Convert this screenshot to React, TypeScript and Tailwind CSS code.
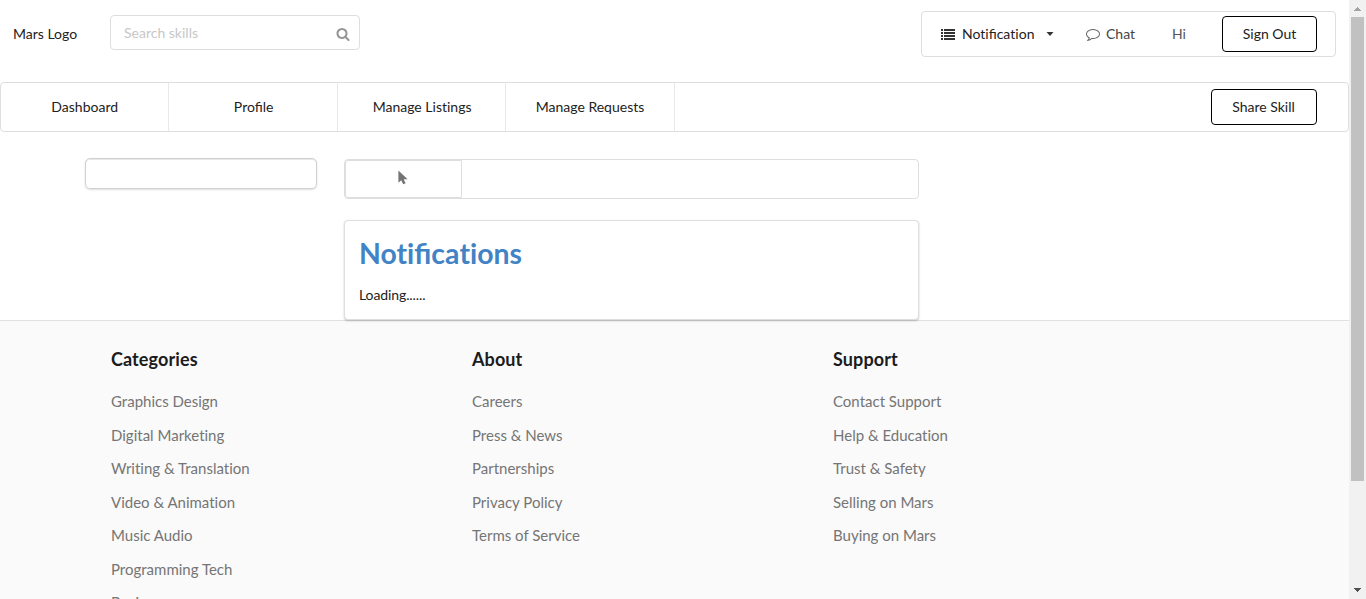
import type { ReactNode } from "react";

const tabs = [
  { label: "Dashboard", style: "" },
  { label: "Profile", style: "pl-px" },
  { label: "Manage Listings", style: "pl-px [font-variant-ligatures:none]" },
  { label: "Manage Requests", style: "" },
];

const columns = [
  {
    title: "Categories",
    links: [
      "Graphics Design",
      "Digital Marketing",
      "Writing & Translation",
      "Video & Animation",
      "Music Audio",
      "Programming Tech",
      "Business",
    ],
  },
  {
    title: "About",
    links: ["Careers", "Press & News", "Partnerships", "Privacy Policy", "Terms of Service"],
  },
  {
    title: "Support",
    links: ["Contact Support", "Help & Education", "Trust & Safety", "Selling on Mars", "Buying on Mars"],
  },
];

function SearchIcon() {
  return (
    <svg viewBox="0 0 1792 1792" className="size-[14px] fill-[#959595]">
      <path d="M1216 832q0-185-131.5-316.5t-316.5-131.5-316.5 131.5-131.5 316.5 131.5 316.5 316.5 131.5 316.5-131.5 131.5-316.5zm512 832q0 52-38 90t-90 38q-54 0-90-38l-343-342q-179 124-399 124-143 0-273.5-55.5t-225-150-150-225-55.5-273.5 55.5-273.5 150-225 225-150 273.5-55.5 273.5 55.5 225 150 150 225 55.5 273.5q0 220-124 399l343 343q37 37 37 90z" />
    </svg>
  );
}

function ListIcon() {
  return (
    <svg viewBox="0 0 14 11" className="h-[11px] w-[14px] fill-[#333]" shapeRendering="crispEdges">
      {[0, 3, 6, 9].map((y) => (
        <g key={y}>
          <rect x="0" y={y} width="2" height="2" />
          <rect x="3" y={y} width="11" height="2" />
        </g>
      ))}
    </svg>
  );
}

function ChatIcon() {
  return (
    <svg viewBox="0 0 1792 1792" className="size-[14px] fill-[#666]">
      <path d="M896 384q-204 0-381.5 69.5t-282 187.5-104.5 255q0 112 71.5 213.5t201.5 175.5l87 50-27 96q-24 91-70 172 152-63 275-171l43-38 57 6q69 8 130 8 204 0 381.5-69.5t282-187.5 104.5-255-104.5-255-282-187.5-381.5-69.5zm896 512q0 174-120 321.5t-326 233-450 85.5q-70 0-145-8-198 175-460 242-49 14-114 22h-5q-15 0-27-10.5t-16-27.5v-1q-3-4-.5-12t2-10 4.5-9.5l6-9 7-8.5 8-9q7-8 31-34.5t34.5-38 31-39.5 32.5-51 27-59 26-76q-157-89-247.5-220t-90.5-281q0-174 120-321.5t326-233 450-85.5 450 85.5 326 233 120 321.5z" />
    </svg>
  );
}

/* Keeps the "fi" ligature while leaving both "ti" pairs unjoined. */
function NotificationWord({ plural = false }: { plural?: boolean }) {
  return (
    <>
      <span className="[font-variant-ligatures:none]">Noti</span>fica
      <span className="[font-variant-ligatures:none]">{plural ? "tions" : "tion"}</span>
    </>
  );
}

function OutlineButton({ children, className }: { children: ReactNode; className: string }) {
  return (
    <button className={`h-9 shrink-0 rounded border border-black bg-white p-0 text-center ${className}`}>
      {children}
    </button>
  );
}

function Header() {
  return (
    <header className="flex h-[82px] shrink-0 items-start px-[13px]">
      <span className="mt-6 w-[97px]">Mars Logo</span>
      <div className="mt-[15px] flex h-[35px] w-[250px] items-center rounded border border-[#dededf] pr-[9px] pl-[13px]">
        <input
          className="w-full min-w-0 flex-1 outline-none placeholder:text-[#c7c7c7]"
          placeholder="Search skills"
        />
        <span className="mt-[3px]">
          <SearchIcon />
        </span>
      </div>
      <nav className="mt-[11px] ml-auto flex h-[46px] w-[415px] items-center rounded border border-[#dededf] pl-[19px]">
        <ListIcon />
        <span className="ml-[7px] w-[84px]">
          <NotificationWord />
        </span>
        <svg viewBox="0 0 8 4" className="h-1 w-2 fill-[#333]">
          <path d="M0.5 0h7L4 4z" />
        </svg>
        <span className="ml-[32px]">
          <ChatIcon />
        </span>
        <span className="ml-[6px] w-[66px] text-[#444]">Chat</span>
        <span className="w-[50px] text-[#555]">Hi</span>
        <OutlineButton className="w-[95px] text-[#222]">Sign Out</OutlineButton>
      </nav>
    </header>
  );
}

function TabBar() {
  return (
    <nav className="flex h-[50px] shrink-0 items-center rounded border border-[#dededf] pr-[31px]">
      {tabs.map((tab) => (
        <a
          key={tab.label}
          className={`flex h-full w-[168.45px] items-center justify-center border-r border-[#e8e8e9] ${tab.style}`}
        >
          {tab.label}
        </a>
      ))}
      <OutlineButton className="ml-auto w-[106px] pr-px">Share Skill</OutlineButton>
    </nav>
  );
}

function Profile() {
  return (
    <main className="relative z-10 flex h-[188px] shrink-0 items-start pt-[26px] pl-[85px]">
      <div className="h-[31px] w-[232px] rounded-[5px] border border-[#d1d1d2] shadow-[0_1px_2px_0_rgba(34,36,38,0.15),inset_0_1px_0_0_#e8e8e8]" />
      <div className="mt-px ml-[27px] w-[575px]">
        <div className="h-10 rounded border border-[#dededf]">
          <div className="h-full w-[117px] rounded-l-[3px] border border-[#dededf] pt-[9px] pl-[52px]">
            <svg viewBox="0 0 10 15" className="h-[15px] w-[10px] fill-[#747474]">
              <path d="M0.4 0.5V12.8L3.2 10.2L5.2 14.3L7.6 13.2L5.7 9.3H9.6Z" />
            </svg>
          </div>
        </div>
        <section className="mt-[21px] h-[100px] rounded border border-[#dededf] bg-white px-[14px] pt-[14px] shadow-[0_1px_2px_0_rgba(34,36,38,0.25)]">
          <h1 className="text-[28.4px] leading-[36px] font-bold text-[#4183c4]">
            <NotificationWord plural />
          </h1>
          <p className="mt-[14px] tracking-[-0.1px]">Loading......</p>
        </section>
      </div>
    </main>
  );
}

function Footer() {
  return (
    <footer className="flex min-h-0 flex-1 border-t border-[#e1e1e2] bg-[#fafafa] pt-[26px] pl-[111px] [font-variant-ligatures:none]">
      {columns.map((column) => (
        <div key={column.title} className="w-[361px]">
          <h2 className="text-[18px] leading-[24px] font-bold tracking-[0.1px] text-[#1b1c1d]">{column.title}</h2>
          <ul className="mt-[14.4px] text-[15px] leading-[33.5px] text-[#757575]">
            {column.links.map((link) => (
              <li key={link}>{link}</li>
            ))}
          </ul>
        </div>
      ))}
    </footer>
  );
}

function Scrollbar() {
  return (
    <div className="flex w-[17px] flex-col items-center bg-[#f1f1f1]">
      <svg viewBox="0 0 17 17" className="size-[17px] fill-[#a3a3a3]" shapeRendering="crispEdges">
        <path d="M8 7h1v1h1v1h1v1h1v1H5v-1h1V9h1V8h1z" />
      </svg>
      <div className="h-[464px] w-[13px] bg-[#c1c1c1]" />
      <svg viewBox="0 0 17 17" className="mt-auto size-[17px] fill-[#505050]" shapeRendering="crispEdges">
        <path d="M5 6h7v1h-1v1h-1v1H9v1H8V9H7V8H6V7H5z" />
      </svg>
    </div>
  );
}

export default function App() {
  return (
    <div className="flex h-[599px] w-[1366px] overflow-hidden bg-white font-['Lato',sans-serif] text-[14px] leading-[20px] text-[#222]">
      <div className="flex h-full w-[1349px] flex-col overflow-hidden">
        <Header />
        <TabBar />
        <Profile />
        <Footer />
      </div>
      <Scrollbar />
    </div>
  );
}
